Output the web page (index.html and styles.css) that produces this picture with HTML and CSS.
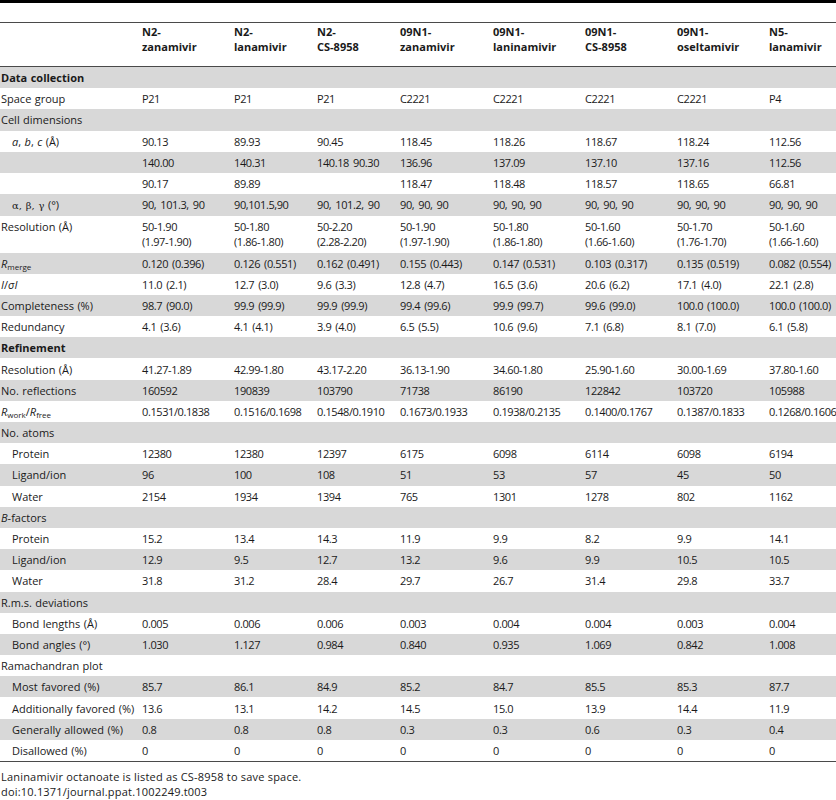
FILE: index.html
```html
<!DOCTYPE html>
<html>
<head>
<meta charset="utf-8">
<link rel="stylesheet" href="styles.css">
</head>
<body>
<div class="page">
  <div class="topbar"></div>
  <table class="data">
    <colgroup>
      <col class="c0"><col class="c1"><col class="c2"><col class="c3"><col class="c4"><col class="c5"><col class="c6"><col class="c7"><col class="c8">
    </colgroup>
    <thead>
      <tr>
        <th></th>
        <th>N2-<br>zanamivir</th>
        <th>N2-<br>lanamivir</th>
        <th>N2-<br>CS-8958</th>
        <th>09N1-<br>zanamivir</th>
        <th>09N1-<br>laninamivir</th>
        <th>09N1-<br>CS-8958</th>
        <th>09N1-<br>oseltamivir</th>
        <th>N5-<br>lanamivir</th>
      </tr>
    </thead>
    <tbody>
      <tr class="g"><td class="sec">Data collection</td><td></td><td></td><td></td><td></td><td></td><td></td><td></td><td></td></tr>
      <tr><td>Space group</td><td>P21</td><td>P21</td><td>P21</td><td>C2221</td><td>C2221</td><td>C2221</td><td>C2221</td><td>P4</td></tr>
      <tr class="g"><td>Cell dimensions</td><td></td><td></td><td></td><td></td><td></td><td></td><td></td><td></td></tr>
      <tr><td class="ind"><i>a</i>, <i>b</i>, <i>c</i> (Å)</td><td>90.13</td><td>89.93</td><td>90.45</td><td>118.45</td><td>118.26</td><td>118.67</td><td>118.24</td><td>112.56</td></tr>
      <tr class="g"><td></td><td>140.00</td><td>140.31</td><td>140.18 90.30</td><td>136.96</td><td>137.09</td><td>137.10</td><td>137.16</td><td>112.56</td></tr>
      <tr><td></td><td>90.17</td><td>89.89</td><td></td><td>118.47</td><td>118.48</td><td>118.57</td><td>118.65</td><td>66.81</td></tr>
      <tr class="g"><td class="ind"><span class="sym">α, β, γ</span> (°)</td><td>90, 101.3, 90</td><td>90,101.5,90</td><td>90, 101.2, 90</td><td>90, 90, 90</td><td>90, 90, 90</td><td>90, 90, 90</td><td>90, 90, 90</td><td>90, 90, 90</td></tr>
      <tr><td>Resolution (Å)</td><td>50-1.90<br>(1.97-1.90)</td><td>50-1.80<br>(1.86-1.80)</td><td>50-2.20<br>(2.28-2.20)</td><td>50-1.90<br>(1.97-1.90)</td><td>50-1.80<br>(1.86-1.80)</td><td>50-1.60<br>(1.66-1.60)</td><td>50-1.70<br>(1.76-1.70)</td><td>50-1.60<br>(1.66-1.60)</td></tr>
      <tr class="g"><td><i>R</i><sub>merge</sub></td><td>0.120 (0.396)</td><td>0.126 (0.551)</td><td>0.162 (0.491)</td><td>0.155 (0.443)</td><td>0.147 (0.531)</td><td>0.103 (0.317)</td><td>0.135 (0.519)</td><td>0.082 (0.554)</td></tr>
      <tr><td><i>I</i>/<i>σI</i></td><td>11.0 (2.1)</td><td>12.7 (3.0)</td><td>9.6 (3.3)</td><td>12.8 (4.7)</td><td>16.5 (3.6)</td><td>20.6 (6.2)</td><td>17.1 (4.0)</td><td>22.1 (2.8)</td></tr>
      <tr class="g"><td>Completeness (%)</td><td>98.7 (90.0)</td><td>99.9 (99.9)</td><td>99.9 (99.9)</td><td>99.4 (99.6)</td><td>99.9 (99.7)</td><td>99.6 (99.0)</td><td>100.0 (100.0)</td><td>100.0 (100.0)</td></tr>
      <tr><td>Redundancy</td><td>4.1 (3.6)</td><td>4.1 (4.1)</td><td>3.9 (4.0)</td><td>6.5 (5.5)</td><td>10.6 (9.6)</td><td>7.1 (6.8)</td><td>8.1 (7.0)</td><td>6.1 (5.8)</td></tr>
      <tr class="g"><td class="sec">Refinement</td><td></td><td></td><td></td><td></td><td></td><td></td><td></td><td></td></tr>
      <tr><td>Resolution (Å)</td><td>41.27-1.89</td><td>42.99-1.80</td><td>43.17-2.20</td><td>36.13-1.90</td><td>34.60-1.80</td><td>25.90-1.60</td><td>30.00-1.69</td><td>37.80-1.60</td></tr>
      <tr class="g"><td>No. reflections</td><td>160592</td><td>190839</td><td>103790</td><td>71738</td><td>86190</td><td>122842</td><td>103720</td><td>105988</td></tr>
      <tr><td><i>R</i><sub>work</sub>/<i>R</i><sub>free</sub></td><td>0.1531/0.1838</td><td>0.1516/0.1698</td><td>0.1548/0.1910</td><td>0.1673/0.1933</td><td>0.1938/0.2135</td><td>0.1400/0.1767</td><td>0.1387/0.1833</td><td>0.1268/0.1606</td></tr>
      <tr class="g"><td>No. atoms</td><td></td><td></td><td></td><td></td><td></td><td></td><td></td><td></td></tr>
      <tr><td class="ind">Protein</td><td>12380</td><td>12380</td><td>12397</td><td>6175</td><td>6098</td><td>6114</td><td>6098</td><td>6194</td></tr>
      <tr class="g"><td class="ind">Ligand/ion</td><td>96</td><td>100</td><td>108</td><td>51</td><td>53</td><td>57</td><td>45</td><td>50</td></tr>
      <tr><td class="ind">Water</td><td>2154</td><td>1934</td><td>1394</td><td>765</td><td>1301</td><td>1278</td><td>802</td><td>1162</td></tr>
      <tr class="g"><td><i>B</i>-factors</td><td></td><td></td><td></td><td></td><td></td><td></td><td></td><td></td></tr>
      <tr><td class="ind">Protein</td><td>15.2</td><td>13.4</td><td>14.3</td><td>11.9</td><td>9.9</td><td>8.2</td><td>9.9</td><td>14.1</td></tr>
      <tr class="g"><td class="ind">Ligand/ion</td><td>12.9</td><td>9.5</td><td>12.7</td><td>13.2</td><td>9.6</td><td>9.9</td><td>10.5</td><td>10.5</td></tr>
      <tr><td class="ind">Water</td><td>31.8</td><td>31.2</td><td>28.4</td><td>29.7</td><td>26.7</td><td>31.4</td><td>29.8</td><td>33.7</td></tr>
      <tr class="g"><td>R.m.s. deviations</td><td></td><td></td><td></td><td></td><td></td><td></td><td></td><td></td></tr>
      <tr><td class="ind">Bond lengths (Å)</td><td>0.005</td><td>0.006</td><td>0.006</td><td>0.003</td><td>0.004</td><td>0.004</td><td>0.003</td><td>0.004</td></tr>
      <tr class="g"><td class="ind">Bond angles (°)</td><td>1.030</td><td>1.127</td><td>0.984</td><td>0.840</td><td>0.935</td><td>1.069</td><td>0.842</td><td>1.008</td></tr>
      <tr><td>Ramachandran plot</td><td></td><td></td><td></td><td></td><td></td><td></td><td></td><td></td></tr>
      <tr class="g"><td class="ind">Most favored (%)</td><td>85.7</td><td>86.1</td><td>84.9</td><td>85.2</td><td>84.7</td><td>85.5</td><td>85.3</td><td>87.7</td></tr>
      <tr><td class="ind">Additionally favored (%)</td><td>13.6</td><td>13.1</td><td>14.2</td><td>14.5</td><td>15.0</td><td>13.9</td><td>14.4</td><td>11.9</td></tr>
      <tr class="g"><td class="ind">Generally allowed (%)</td><td>0.8</td><td>0.8</td><td>0.8</td><td>0.3</td><td>0.3</td><td>0.6</td><td>0.3</td><td>0.4</td></tr>
      <tr><td class="ind">Disallowed (%)</td><td>0</td><td>0</td><td>0</td><td>0</td><td>0</td><td>0</td><td>0</td><td>0</td></tr>
    </tbody>
  </table>
  <div class="foot">
    <p>Laninamivir octanoate is listed as CS-8958 to save space.</p>
    <p>doi:10.1371/journal.ppat.1002249.t003</p>
  </div>
</div>
</body>
</html>
```

FILE: styles.css
```css
html, body {
  margin: 0;
  padding: 0;
  background: #ffffff;
}
body {
  font-family: "Open Sans", "DejaVu Sans", sans-serif;
  font-size: 11px;
  color: #1a1a1a;
}
.page {
  width: 836px;
}
.topbar {
  height: 3px;
  background: #000;
  margin-bottom: 19px;
}
.data {
  width: 836px;
  border-collapse: collapse;
  table-layout: fixed;
  border-top: 1px solid #4a4a4a;
  border-bottom: 1.5px solid #4a4a4a;
}
.c0 { width: 142px; }
.c1 { width: 92px; }
.c2 { width: 83px; }
.c3 { width: 83px; }
.c4 { width: 93px; }
.c5 { width: 92px; }
.c6 { width: 92px; }
.c7 { width: 92px; }
.c8 { width: 67px; }
thead th {
  text-align: left;
  vertical-align: top;
  font-weight: 700;
  line-height: 15px;
  padding: 0.5px 0 12.5px 0;
  border-bottom: 1px solid #4a4a4a;
  white-space: nowrap;
}
tbody td {
  line-height: 15px;
  padding: 3.1px 0;
  vertical-align: top;
  white-space: nowrap;
  letter-spacing: -0.4px;
  word-spacing: 1.6px;
}
tbody td:first-child {
  padding-left: 1px;
  letter-spacing: 0;
  word-spacing: 0.6px;
}
tbody td.ind {
  padding-left: 12px;
}
tr.g td {
  background: #d8d8d8;
}
td.sec {
  font-weight: 700;
}
sub {
  font-size: 8px;
  line-height: 0;
  vertical-align: -2px;
  letter-spacing: 0;
}
.sym {
  font-family: "DejaVu Serif", "Liberation Serif", serif;
  font-size: 10px;
}
.foot {
  padding-top: 7px;
  padding-left: 1px;
  letter-spacing: 0.2px;
}
.foot p {
  margin: 0;
  line-height: 15px;
}
```
